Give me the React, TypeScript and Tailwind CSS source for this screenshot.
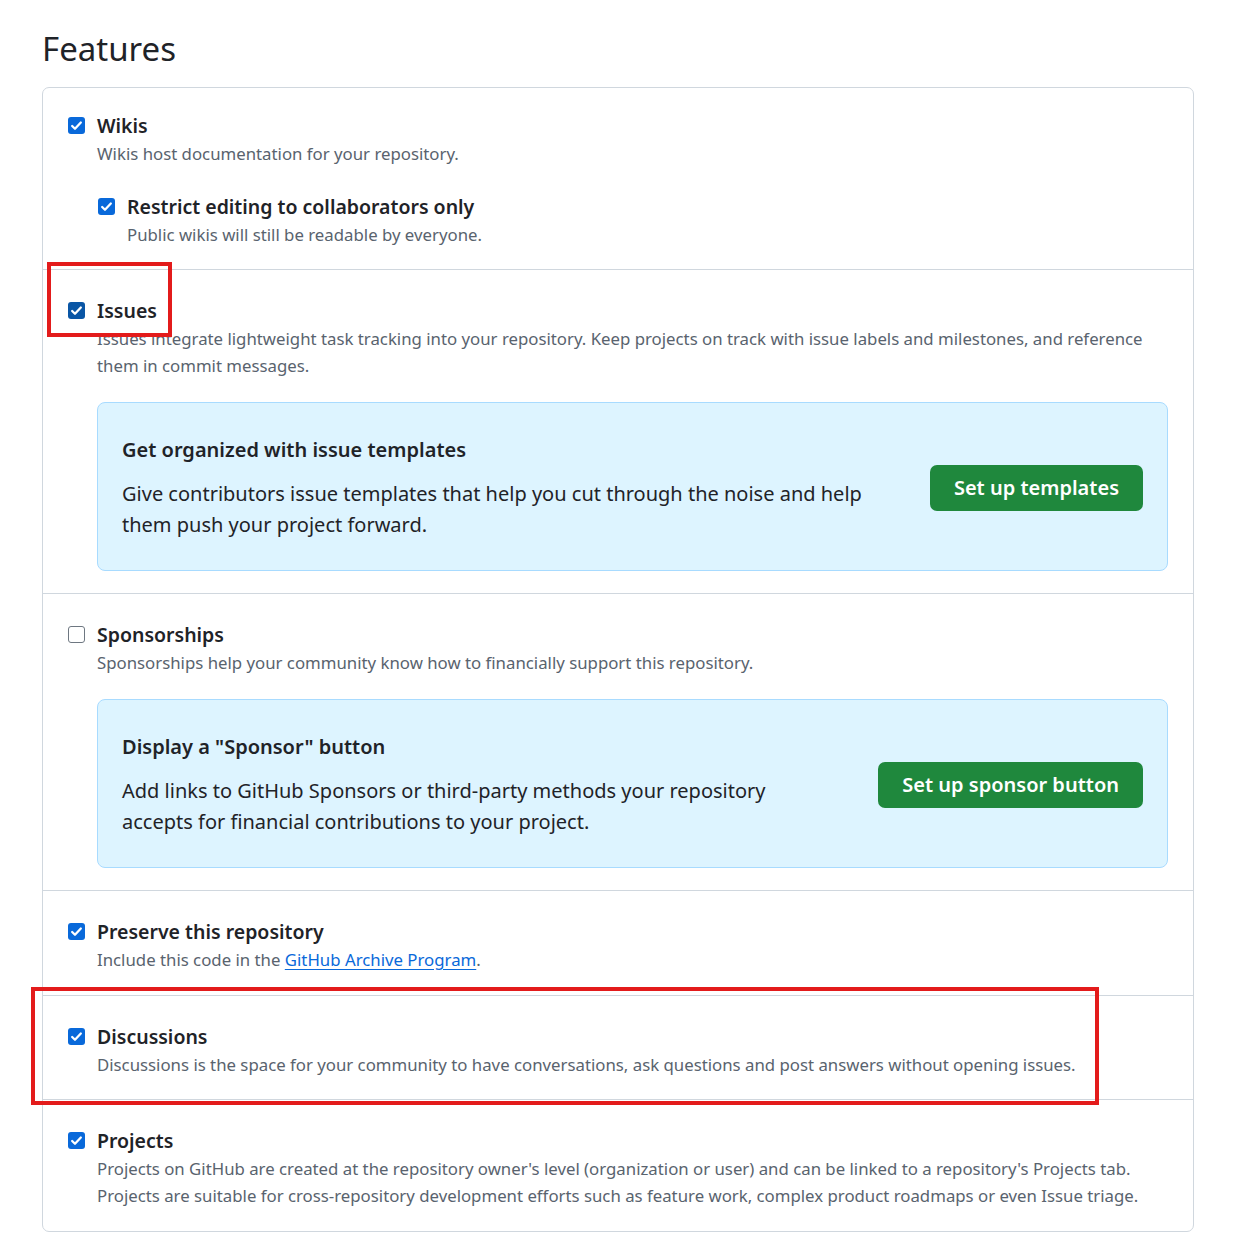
import React from "react";

type Row = {
  title: string;
  checked: boolean;
  focused?: boolean;
  desc: React.ReactNode;
};

function Checkbox({ checked, focused }: { checked: boolean; focused?: boolean }) {
  if (!checked) {
    return (
      <div className="w-[17px] h-[17px] shrink-0 rounded-[3px] border border-[#6e7781] bg-white" />
    );
  }
  return (
    <div
      className={`w-[17px] h-[17px] shrink-0 rounded-[3px] flex items-center justify-center ${
        focused ? "bg-[#0a56a5]" : "bg-[#0969da]"
      }`}
    >
      <svg width="13" height="13" viewBox="0 0 12 12" fill="none">
        <path d="M2 6.4l2.6 2.6 5.4-5.8" stroke="white" strokeWidth="2.1" strokeLinecap="round" strokeLinejoin="round" />
      </svg>
    </div>
  );
}

function Option({ title, checked, focused, desc, children }: Row & { children?: React.ReactNode }) {
  return (
    <div className="flex gap-[12px]">
      <div className="pt-[6px]">
        <Checkbox checked={checked} focused={focused} />
      </div>
      <div className="flex-1 min-w-0">
        <div className="text-[19.5px] leading-[29px] font-semibold text-[#1f2328]">{title}</div>
        <div className="text-[16.8px] leading-[27px] text-[#59636e]">{desc}</div>
        {children}
      </div>
    </div>
  );
}

function Promo({ title, body, button }: { title: string; body: string; button: string }) {
  return (
    <div className="mt-[23px] flex items-center rounded-[8px] border border-[#a8dbff] bg-[#ddf4ff] pl-[24px] pr-[24px] pt-[32px] pb-[30px]">
      <div className="flex-1 min-w-0 pr-[60px]">
        <div className="text-[20px] leading-[30px] font-semibold text-[#1f2328]">{title}</div>
        <p className="mt-[13px] text-[20px] leading-[31px] text-[#1f2328]">{body}</p>
      </div>
      <button className="h-[46px] shrink-0 rounded-[7px] bg-[#1f883d] px-[24px] text-[20px] font-semibold text-white">
        {button}
      </button>
    </div>
  );
}

export default function App() {
  return (
    <div
      className="relative min-h-screen bg-white pt-[27px] pb-[16px]"
      style={{ fontFamily: '"Noto Sans", "Open Sans", sans-serif' }}
    >
      <div className="ml-[42px] w-[1152px]">
        <h2 className="text-[33px] leading-[44px] font-normal text-[#1f2328]">Features</h2>

        <div className="mt-[16px] rounded-[7px] border border-[#d0d7de]">
          {/* Wikis */}
          <div className="px-[25px] pt-[23px] pb-[21px]">
            <Option title="Wikis" checked desc="Wikis host documentation for your repository.">
              <div className="mt-[25px] ml-[1px]">
                <Option
                  title="Restrict editing to collaborators only"
                  checked
                  desc="Public wikis will still be readable by everyone."
                />
              </div>
            </Option>
          </div>

          {/* Issues */}
          <div className="border-t border-[#d0d7de] px-[25px] pt-[26px] pb-[22px]">
            <Option
              title="Issues"
              checked
              focused
              desc="Issues integrate lightweight task tracking into your repository. Keep projects on track with issue labels and milestones, and reference them in commit messages."
            >
              <Promo
                title="Get organized with issue templates"
                body="Give contributors issue templates that help you cut through the noise and help them push your project forward."
                button="Set up templates"
              />
            </Option>
          </div>

          {/* Sponsorships */}
          <div className="border-t border-[#d0d7de] px-[25px] pt-[26px] pb-[22px]">
            <Option
              title="Sponsorships"
              checked={false}
              desc="Sponsorships help your community know how to financially support this repository."
            >
              <Promo
                title={'Display a "Sponsor" button'}
                body="Add links to GitHub Sponsors or third-party methods your repository accepts for financial contributions to your project."
                button="Set up sponsor button"
              />
            </Option>
          </div>

          {/* Preserve */}
          <div className="border-t border-[#d0d7de] px-[25px] pt-[26px] pb-[22px]">
            <Option
              title="Preserve this repository"
              checked
              desc={
                <>
                  Include this code in the{" "}
                  <a className="text-[#0969da] underline underline-offset-[3px]" href="#">
                    GitHub Archive Program
                  </a>
                  .
                </>
              }
            />
          </div>

          {/* Discussions */}
          <div className="border-t border-[#d0d7de] px-[25px] pt-[26px] pb-[21px]">
            <Option
              title="Discussions"
              checked
              desc="Discussions is the space for your community to have conversations, ask questions and post answers without opening issues."
            />
          </div>

          {/* Projects */}
          <div className="border-t border-[#d0d7de] px-[25px] pt-[26px] pb-[22px]">
            <Option
              title="Projects"
              checked
              desc="Projects on GitHub are created at the repository owner's level (organization or user) and can be linked to a repository's Projects tab. Projects are suitable for cross-repository development efforts such as feature work, complex product roadmaps or even Issue triage."
            />
          </div>
        </div>
      </div>

      {/* annotation overlays */}
      <div className="pointer-events-none absolute left-[47px] top-[262px] h-[75px] w-[125px] border-[4px] border-[#e31b1b]" />
      <div className="pointer-events-none absolute left-[31px] top-[987px] h-[118px] w-[1068px] border-[4px] border-[#e31b1b]" />
    </div>
  );
}
